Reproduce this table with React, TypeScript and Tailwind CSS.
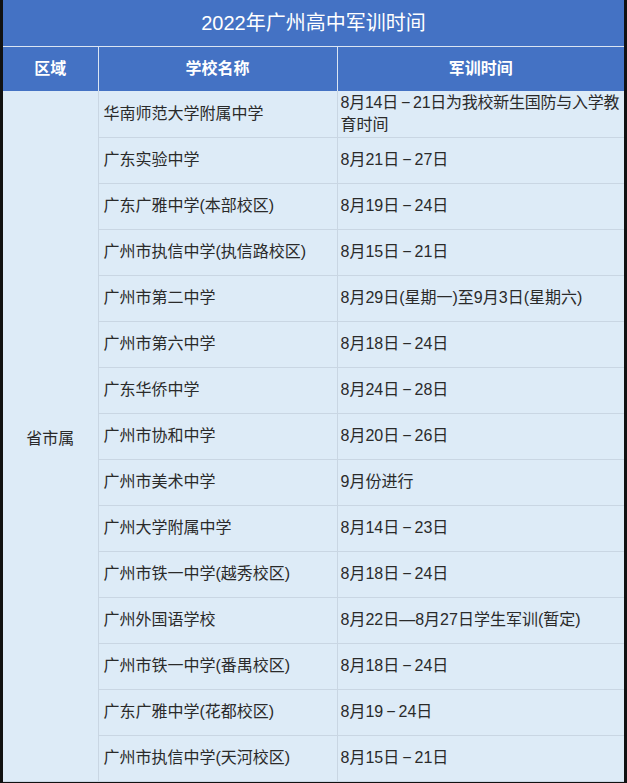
import React from 'react'

const D = () => <span className="px-[3px]">−</span>

const rows: [string, React.ReactNode][] = [
  [
    '华南师范大学附属中学',
    <>
      <span className="whitespace-nowrap tracking-[-0.25px]">
        8月14日<D />21日为我校新生国防与入学教
      </span>
      <br />
      育时间
    </>,
  ],
  ['广东实验中学', <>8月21日<D />27日</>],
  ['广东广雅中学(本部校区)', <>8月19日<D />24日</>],
  ['广州市执信中学(执信路校区)', <>8月15日<D />21日</>],
  ['广州市第二中学', '8月29日(星期一)至9月3日(星期六)'],
  ['广州市第六中学', <>8月18日<D />24日</>],
  ['广东华侨中学', <>8月24日<D />28日</>],
  ['广州市协和中学', <>8月20日<D />26日</>],
  ['广州市美术中学', '9月份进行'],
  ['广州大学附属中学', <>8月14日<D />23日</>],
  ['广州市铁一中学(越秀校区)', <>8月18日<D />24日</>],
  ['广州外国语学校', '8月22日—8月27日学生军训(暂定)'],
  ['广州市铁一中学(番禺校区)', <>8月18日<D />24日</>],
  ['广东广雅中学(花都校区)', <>8月19<D />24日</>],
  ['广州市执信中学(天河校区)', <>8月15日<D />21日</>],
]

export default function App() {
  return (
    <div
      className="h-[783px] overflow-hidden bg-[#111111] px-[3px]"
      style={{ fontFamily: '"Liberation Sans", "Noto Sans CJK SC", sans-serif' }}
    >
      <table className="w-[621px] table-fixed border-collapse">
        <colgroup>
          <col className="w-[95px]" />
          <col className="w-[239px]" />
          <col className="w-[287px]" />
        </colgroup>
        <thead>
          <tr className="h-[46px] bg-[#4472c4]">
            <th colSpan={3} className="border-b border-[#dbe5f3] text-center text-[20px] font-normal text-white">
              2022年广州高中军训时间
            </th>
          </tr>
          <tr className="h-[45px] bg-[#4472c4] text-[16px] font-bold text-white">
            <th className="border-r border-[#dbe5f3] text-center">区域</th>
            <th className="border-r border-[#dbe5f3] text-center">学校名称</th>
            <th className="text-center">军训时间</th>
          </tr>
        </thead>
        <tbody className="bg-[#ddebf7] text-[16px] text-[#2a2a2a]">
          {rows.map(([school, time], i) => (
            <tr key={school} className="h-[46px]">
              {i === 0 && (
                <td rowSpan={rows.length + 1} className="border-r border-b border-[#c9d6e3] align-top text-center">
                  <div className="pt-[336px]">省市属</div>
                </td>
              )}
              <td className="border-r border-b border-[#c9d6e3] px-[5px] leading-[22px]">{school}</td>
              <td className="border-b border-[#c9d6e3] pl-[3px] pr-[2px] leading-[22px]">{time}</td>
            </tr>
          ))}
        </tbody>
      </table>
    </div>
  )
}
